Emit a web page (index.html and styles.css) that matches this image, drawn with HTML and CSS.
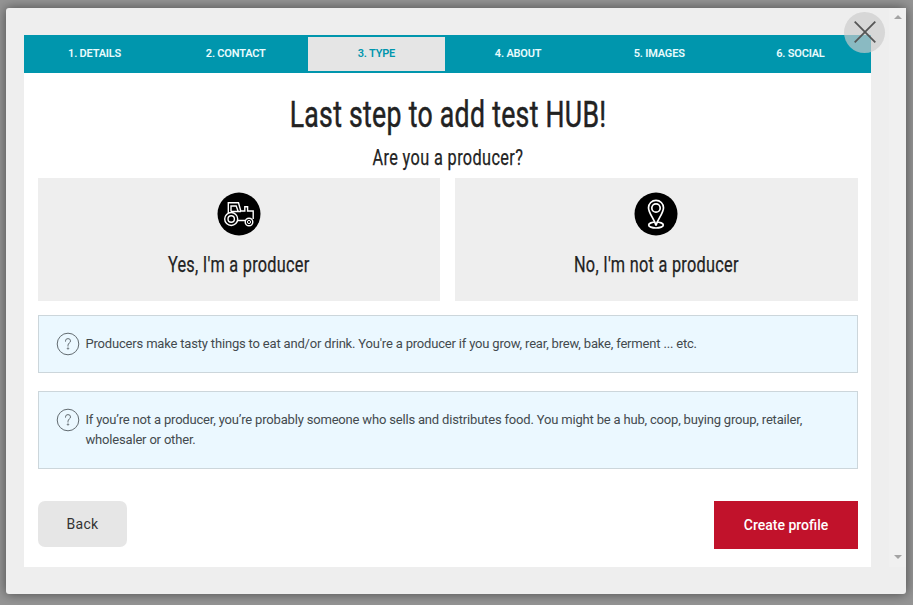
FILE: index.html
```html
<!DOCTYPE html>
<html lang="en">
<head>
<meta charset="utf-8">
<title>Create profile</title>
<link rel="stylesheet" href="styles.css">
</head>
<body>
<div class="dialog">
  <main class="panel">
    <nav class="tabs">
      <span class="tab">1. DETAILS</span>
      <span class="tab">2. CONTACT</span>
      <span class="tab active">3. TYPE</span>
      <span class="tab">4. ABOUT</span>
      <span class="tab">5. IMAGES</span>
      <span class="tab">6. SOCIAL</span>
    </nav>
    <div class="content">
      <h1><span class="condensed">Last step to add test HUB!</span></h1>
      <h2><span class="condensed">Are you a producer?</span></h2>
      <div class="choices">
        <div class="choice">
          <svg width="44" height="44" viewBox="0 0 44 44" fill="none" stroke="#fff" stroke-width="1.4">
            <circle cx="22" cy="22" r="21.5" fill="#000" stroke="none"/>
            <path d="M11.300 21V10.800H21.500l2.300 8.200h4v-4.200h2.800V19H36.200v8M20.500 28.500h8"/>
            <path d="M14 19.500v-5.500h5.200l2 5.500M14 19.500h10"/>
            <circle cx="14.200" cy="27" r="6.500" fill="#000"/>
            <circle cx="14.200" cy="27" r="3.200"/>
            <circle cx="32" cy="30" r="3.800" fill="#000"/>
            <circle cx="32" cy="30" r="1.600" stroke-width="1"/>
          </svg>
          <h3><span class="condensed">Yes, I'm a producer</span></h3>
        </div>
        <div class="choice">
          <svg class="pin" width="44" height="44" viewBox="0 0 44 44" fill="none" stroke="#fff" stroke-width="1.700">
            <circle cx="22" cy="22" r="21.500" fill="#000" stroke="none"/>
            <ellipse cx="22" cy="33" rx="7.300" ry="3"/>
            <path fill="#000" d="M22 33.500C20.500 27 14.500 21.500 14.500 15.800a7.500 7.500 0 0 1 15 0C29.500 21.500 23.500 27 22 33.500Z"/>
            <circle cx="22" cy="16" r="4.200"/>
          </svg>
          <h3><span class="condensed">No, I'm not a producer</span></h3>
        </div>
      </div>
      <div class="info">
        <svg width="24" height="24" viewBox="0 0 24 24" fill="none" stroke="#626b70"><circle cx="12" cy="12" r="10.800"/><path d="M9.500 9.600V8.900a2.500 2.300 0 0 1 5 0c0 2.200-2.500 2-2.500 4.400v1.200"/><circle cx="12" cy="16.500" r=".7"/></svg>
        <p>Producers make tasty things to eat and/or drink. You're a producer if you grow, rear, brew, bake, ferment ... etc.</p>
      </div>
      <div class="info">
        <svg width="24" height="24" viewBox="0 0 24 24" fill="none" stroke="#626b70"><circle cx="12" cy="12" r="10.800"/><path d="M9.500 9.600V8.900a2.500 2.300 0 0 1 5 0c0 2.200-2.500 2-2.500 4.400v1.200"/><circle cx="12" cy="16.500" r=".7"/></svg>
        <p>If you’re not a producer, you’re probably someone who sells and distributes food. You might be a hub, coop, buying group, retailer, wholesaler or other.</p>
      </div>
      <div class="actions">
        <button class="back">Back</button>
        <button class="create">Create profile</button>
      </div>
    </div>
  </main>
  <div class="scrollbar">
    <svg width="8" height="4" viewBox="0 0 8 4"><path d="M0 4 4 0l4 4Z" fill="#a3a3a3"/></svg>
    <svg width="8" height="4" viewBox="0 0 8 4"><path d="M0 0h8L4 4Z" fill="#a3a3a3"/></svg>
  </div>
  <div class="close">
    <svg width="22" height="22" viewBox="0 0 22 22" stroke="#555" stroke-width="1.800"><path d="m.7.700 20.600 20.600M21.300.700.700 21.300"/></svg>
  </div>
</div>
</body>
</html>
```
FILE: styles.css
```css
* { box-sizing: border-box; }
body {
  margin: 0;
  height: 605px;
  padding: 8px 7px 11px 6px;
  overflow: hidden;
  background: #959595;
  font-family: Roboto, sans-serif;
  color: #222;
}
h1, h2, h3, p { margin: 0; font-weight: 400; }
.dialog {
  position: relative;
  height: 586px;
  display: flex;
  justify-content: space-between;
  padding: 0 0 27px 18px;
  background: #eee;
  border-radius: 3px;
  box-shadow: 0 0 12px rgba(0, 0, 0, .5);
}
.panel { width: 847px; height: 532px; margin-top: 27px; background: #fff; }
.tabs {
  display: grid;
  grid-template-columns: repeat(6, 1fr);
  height: 38px;
  padding: 2px 0;
  background: #0096ad;
}
.tab {
  margin: 0 2px;
  text-align: center;
  font-size: 11px;
  font-weight: 600;
  line-height: 33px;
  letter-spacing: -.2px;
  color: #e9fbfd;
}
.tab.active { margin-right: 3px; background: #e5e5e5; color: #0096ad; }
.content { padding: 0 13px 0 14px; }
.condensed {
  display: inline-block;
  white-space: nowrap;
  transform: scaleX(.74);
  letter-spacing: .5px;
  -webkit-text-stroke: .25px currentColor;
}
h1, h2, h3 { display: flex; justify-content: center; }
h1 { height: 66px; padding-top: 14px; font-size: 36px; line-height: 56px; }
h1 .condensed { letter-spacing: .4px; -webkit-text-stroke-width: .5px; }
h2 { height: 39px; font-size: 22px; line-height: 38px; }
.choices { display: grid; grid-template-columns: 402px 403px; gap: 15px; }
.choice {
  height: 123px;
  padding-top: 14px;
  display: flex;
  flex-direction: column;
  align-items: center;
  background: #eee;
}
.pin { margin-right: 1px; }
h3 { font-size: 22px; line-height: 30px; margin-top: 14px; }
h3 .condensed { letter-spacing: .37px; }
.info {
  display: flex;
  gap: 6px;
  padding: 16px 50px 16px 16.5px;
  border: 1px solid #ccd6db;
  background: #ebf8ff;
  margin-top: 14px;
  height: 58px;
  font-size: 13px;
  line-height: 20px;
  letter-spacing: -.18px;
  color: #434a4e;
}
.info svg { flex: none; }
.info p { padding-top: 2px; }
.info + .info { height: 78px; margin-top: 18px; }
.actions { display: flex; justify-content: space-between; align-items: flex-start; margin-top: 32px; }
button { border: 0; padding: 0; font-family: inherit; font-size: 14px; }
.back { width: 89px; height: 46px; border-radius: 7px; background: #e6e6e6; color: #333; letter-spacing: .25px; }
.create { width: 144px; height: 48px; background: #c1122b; color: #fff; font-weight: 500; }
.scrollbar {
  width: 17px;
  display: flex;
  flex-direction: column;
  justify-content: space-between;
  align-items: center;
  padding: 7px 0 8px;
  background: #f0f0f0;
}
.close {
  position: absolute;
  left: 838px;
  top: 4px;
  width: 41px;
  height: 41px;
  border-radius: 50%;
  display: flex;
  align-items: center;
  justify-content: center;
  padding-bottom: 2px;
  background: rgba(204, 204, 204, .68);
}
```
